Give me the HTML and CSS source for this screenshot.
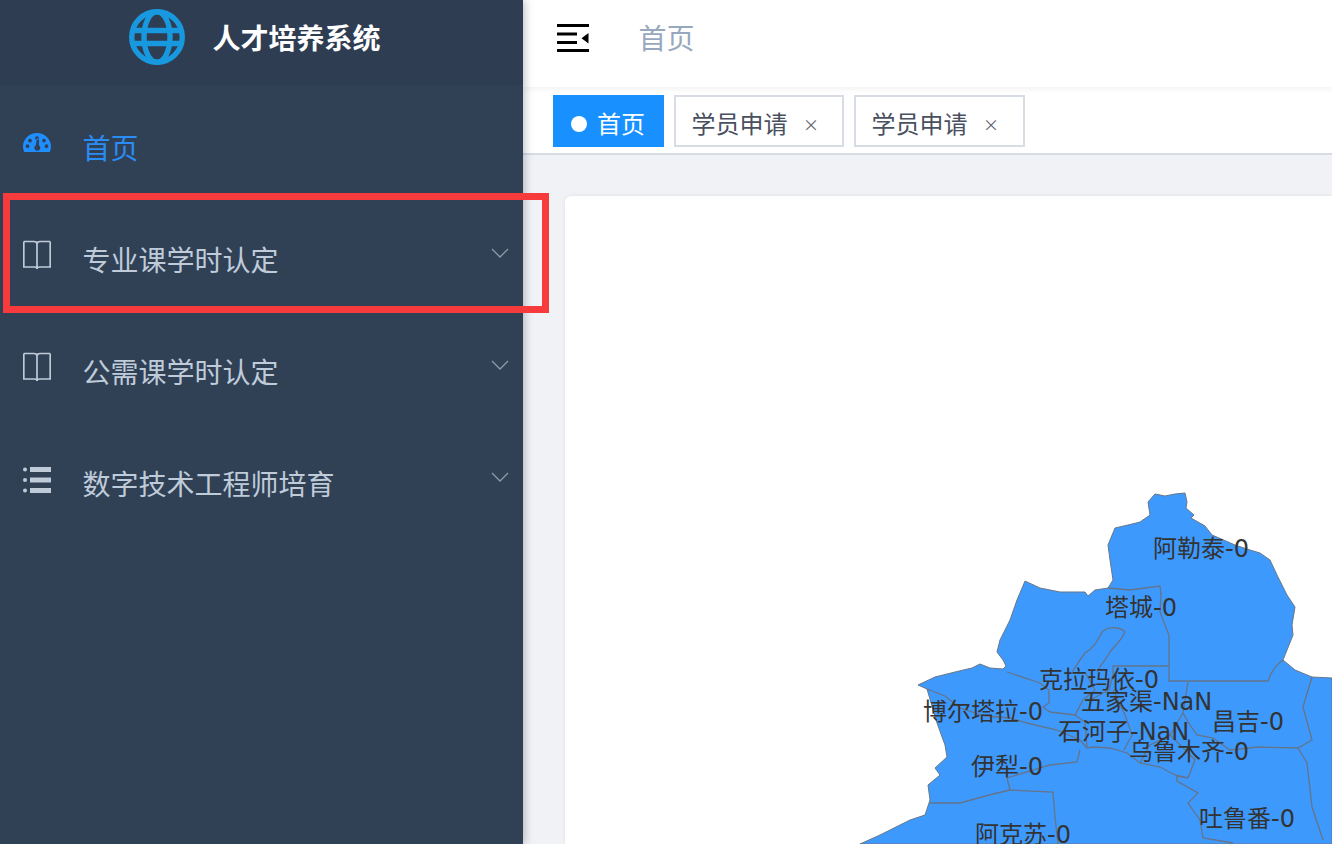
FILE: index.html
```html
<!DOCTYPE html>
<html lang="zh-CN">
<head>
<meta charset="utf-8">
<title>人才培养系统</title>
<link rel="stylesheet" href="styles.css">
</head>
<body>
<div class="app">
  <aside class="sidebar">
    <div class="logo">
      <svg class="logo-icon" viewBox="0 0 56 56"><g fill="none" stroke="#1898de" stroke-width="5.400"><circle cx="28" cy="28" r="25.300"/><ellipse cx="28" cy="28" rx="13" ry="25.300"/><path d="M3 21.500H53M3 34.500H53"/></g></svg>
      <h1 class="logo-title">人才培养系统</h1>
    </div>
    <nav class="menu">
      <a class="menu-item active">
        <svg class="menu-icon" viewBox="0 -2 28 30"><path fill="#1f8fff" fill-rule="evenodd" d="M14 3C6.300 3 0 9 0 16.500 0 18.500.4 20.300 1.200 22H26.800C27.600 20.300 28 18.500 28 16.500 28 9 21.700 3 14 3ZM14 6.200A1.900 1.900 0 1 1 14 10 1.900 1.900 0 0 1 14 6.200ZM7 8.700A1.900 1.900 0 1 1 7 12.500 1.900 1.900 0 0 1 7 8.700ZM21 8.700A1.900 1.900 0 1 1 21 12.500 1.900 1.900 0 0 1 21 8.700ZM4.500 14.300A1.900 1.900 0 1 1 4.500 18.100 1.900 1.900 0 0 1 4.500 14.300ZM23.500 14.300A1.900 1.900 0 1 1 23.500 18.100 1.900 1.900 0 0 1 23.500 14.300ZM16 8.500 15.900 15.200A3 3 0 1 1 12.800 15.200L14 8.500Z"/></svg>
        <span class="menu-text">首页</span>
      </a>
      <a class="menu-item">
        <svg class="menu-icon" viewBox="0 0 28 30"><path fill="none" stroke="#bfcbd9" stroke-width="1.700" d="M.8 1.500H11C12.800 1.500 14 2.500 14 4V28M27.200 1.500H17C15.200 1.500 14 2.500 14 4M.8 1.500V27H11.500C13 27 14 27.500 14 29 14 27.500 15 27 16.500 27H27.200V1.500"/></svg>
        <span class="menu-text">专业课学时认定</span>
        <svg class="chevron" viewBox="0 0 18 10"><path fill="none" stroke="#8d99a8" stroke-width="1.300" d="M1 1 9 9 17 1"/></svg>
      </a>
      <a class="menu-item">
        <svg class="menu-icon" viewBox="0 0 28 30"><path fill="none" stroke="#bfcbd9" stroke-width="1.700" d="M.8 1.500H11C12.800 1.500 14 2.500 14 4V28M27.200 1.500H17C15.200 1.500 14 2.500 14 4M.8 1.500V27H11.500C13 27 14 27.500 14 29 14 27.500 15 27 16.500 27H27.200V1.500"/></svg>
        <span class="menu-text">公需课学时认定</span>
        <svg class="chevron" viewBox="0 0 18 10"><path fill="none" stroke="#8d99a8" stroke-width="1.300" d="M1 1 9 9 17 1"/></svg>
      </a>
      <a class="menu-item">
        <svg class="menu-icon" viewBox="0 -3 28 30"><g fill="#bfcbd9"><circle cx="2" cy="2.500" r="2"/><circle cx="2" cy="13" r="2"/><circle cx="2" cy="23.500" r="2"/><rect x="7" y="0" width="21" height="5"/><rect x="7" y="10.500" width="21" height="5"/><rect x="7" y="21" width="21" height="5"/></g></svg>
        <span class="menu-text">数字技术工程师培育</span>
        <svg class="chevron" viewBox="0 0 18 10"><path fill="none" stroke="#8d99a8" stroke-width="1.300" d="M1 1 9 9 17 1"/></svg>
      </a>
    </nav>
  </aside>
  <main class="main">
    <header class="navbar">
      <svg class="hamburger" viewBox="0 0 32 28"><path fill="#000" d="M0 0H32V3H0ZM0 8.500H20V11.500H0ZM0 17H20V20H0ZM0 25H32V28H0Z"/><path fill="#000" d="M31.500 9V19.500L24.500 14.200Z"/></svg>
      <span class="crumb">首页</span>
    </header>
    <div class="tags">
      <a class="tag tag-active"><i class="dot"></i>首页</a>
      <a class="tag">学员申请<span class="close">×</span></a>
      <a class="tag">学员申请<span class="close">×</span></a>
    </div>
    <section class="content">
      <div class="card">
        <svg class="map" viewBox="565 196 767 648">
          <path class="land" d="M918 685 935 677 955 672 972 668 980 664 990 668 1003 669 1006 666 1003 660 997 652 1000 640 1010 620 1017 600 1025 581 1040 588 1060 592 1085 592 1088 596 1095 590 1108 588 1113 580 1110 560 1108 545 1115 528 1128 525 1140 522 1150 515 1148 502 1155 494 1165 496 1175 494 1185 493 1187 502 1186 508 1194 515 1191 518 1205 526 1212 535 1235 545 1250 550 1260 553 1270 560 1277 575 1287 595 1295 607 1292 625 1293 635 1283 660 1295 670 1312 677 1332 678V844H860L880 835 910 820 925 815 930 800 928 785 940 775 935 768 947 757 945 745 937 723 927 689Z"/>
          <g class="border">
            <path d="M1108 588 1130 590 1160 586 1161 595 1160 612 1169 635V681H1268C1271 672 1276 665 1283 660"/>
            <path d="M1169 666H1113V675L1109 690 1090 700"/>
            <path d="M1125 632C1121 627 1110 626 1103 631 1098 637 1098 645 1085 653 1078 662 1075 668 1072 672M1125 632C1122 640 1115 645 1110 652 1106 660 1100 665 1097 672"/>
            <path d="M1007 672 1040 683 1049 690V703L1043 707 1050 712 1075 715 1083 700 1095 690 1085 672"/>
            <path d="M927 689 945 696 960 708 985 716 1010 718 1027 723 1057 730 1080 740 1087 748 1093 747 1110 748 1127 753 1140 763 1160 767 1175 775 1188 778 1177 776V781L1198 793 1188 803 1200 820 1203 838 1233 843"/>
            <path d="M1080 750 1077 762 1050 765 1007 778 1010 790 1053 792 1055 817 1058 844"/>
            <path d="M1010 790 993 794 960 803 930 803"/>
            <path d="M1075 715 1085 722 1087 748M1113 690 1125 715 1132 735 1124 750"/>
            <path d="M1188 682 1183 713 1190 725 1197 735 1213 738 1230 750 1258 747 1298 748 1312 740 1303 707 1312 677"/>
            <path d="M1298 748 1307 763 1312 807 1323 840M1183 713 1170 735 1150 745 1140 763M1170 735 1195 760 1188 778"/>
          </g>
          <g class="labels">
            <text x="1153" y="557">阿勒泰-0</text>
            <text x="1105" y="616">塔城-0</text>
            <text x="1039" y="688">克拉玛依-0</text>
            <text x="1081" y="710">五家渠-NaN</text>
            <text x="923" y="720">博尔塔拉-0</text>
            <text x="1212" y="730">昌吉-0</text>
            <text x="1058" y="740">石河子-NaN</text>
            <text x="1129" y="760">乌鲁木齐-0</text>
            <text x="971" y="775">伊犁-0</text>
            <text x="1199" y="827">吐鲁番-0</text>
            <text x="975" y="843">阿克苏-0</text>
          </g>
        </svg>
      </div>
    </section>
  </main>
  <div class="highlight"></div>
</div>
</body>
</html>
```
FILE: styles.css
```css
* { box-sizing: border-box; }
html, body { margin: 0; height: 100%; overflow: hidden; }
body { font-family: "Noto Sans CJK SC", "Liberation Sans", sans-serif; background: #fff; }
.app { position: relative; display: flex; width: 1332px; height: 844px; overflow: hidden; }

.sidebar { flex: none; width: 523px; background: #304156; box-shadow: 2px 0 8px rgba(0, 21, 41, .25); position: relative; z-index: 2; }
.logo { height: 85px; background: #2e3d52; display: flex; align-items: center; padding: 0 0 11px 129px; }
.logo-icon { width: 56px; height: 56px; flex: none; }
.logo-title { margin: -1px 0 0 27.500px; color: #fff; font-size: 28px; font-weight: 700; line-height: 40px; }

.menu { display: flex; flex-direction: column; padding-top: 7px; }
.menu-item { height: 112px; display: flex; align-items: center; padding: 0 14px 0 23px; color: #bfcbd9; font-size: 28px; }
.menu-item.active { color: #2a8cf5; }
.menu-icon { width: 28px; height: 30px; flex: none; margin-top: -10px; }
.menu-text { margin: -2px 0 0 31.500px; line-height: 40px; }
.chevron { width: 18px; height: 10px; flex: none; margin: -14px 0 0 auto; }

.main { flex: 1; min-width: 0; display: flex; flex-direction: column; background: #f0f2f5; }
.navbar { flex: none; height: 87px; background: #fff; display: flex; align-items: center; padding: 0 0 12px 34px; box-shadow: 0 2px 6px rgba(0, 21, 41, .06); position: relative; z-index: 1; }
.hamburger { width: 32px; height: 28px; flex: none; }
.crumb { margin: -1px 0 0 49.500px; font-size: 28px; line-height: 40px; color: #97a8be; }

.tags { flex: none; height: 68px; background: #fff; border-bottom: 2px solid #d8dce5; display: flex; align-items: flex-start; gap: 10px; padding: 8px 0 0 30px; }
.tag { height: 52px; display: flex; align-items: center; padding: 2px 0 0 15.500px; width: 170px; border: 2px solid #d8dce5; background: #fff; color: #495060; font-size: 24px; }
.tag + .tag + .tag { width: 171px; }
.tag-active { width: 111px; background: #1890ff; border-color: #1890ff; color: #fff; padding-left: 16px; }
.dot { width: 16px; height: 16px; border-radius: 50%; background: #fff; margin: 3px 10px 0 0; flex: none; }
.close { margin: 3px 0 0 15.500px; font-size: 16px; color: #5f6570; }

.content { flex: 1; min-height: 0; padding: 41px 0 0 42px; }
.card { position: relative; height: 100%; background: #fff; border-radius: 6px 0 0 0; box-shadow: 0 0 4px rgba(0, 0, 0, .08); }
.map { position: absolute; left: 0; top: 0; width: 767px; height: 648px; display: block; overflow: hidden; }
.land { fill: #3e99fd; stroke: #66778c; stroke-width: 1; }
.border path { fill: none; stroke: #64748a; stroke-width: 1.300; }
.labels text { font-family: "DejaVu Sans", "Noto Sans CJK SC", sans-serif; font-size: 24px; fill: #333; }

.highlight { position: absolute; left: 3px; top: 193px; width: 546px; height: 120px; border: 7px solid #f73a3c; z-index: 3; }
```
